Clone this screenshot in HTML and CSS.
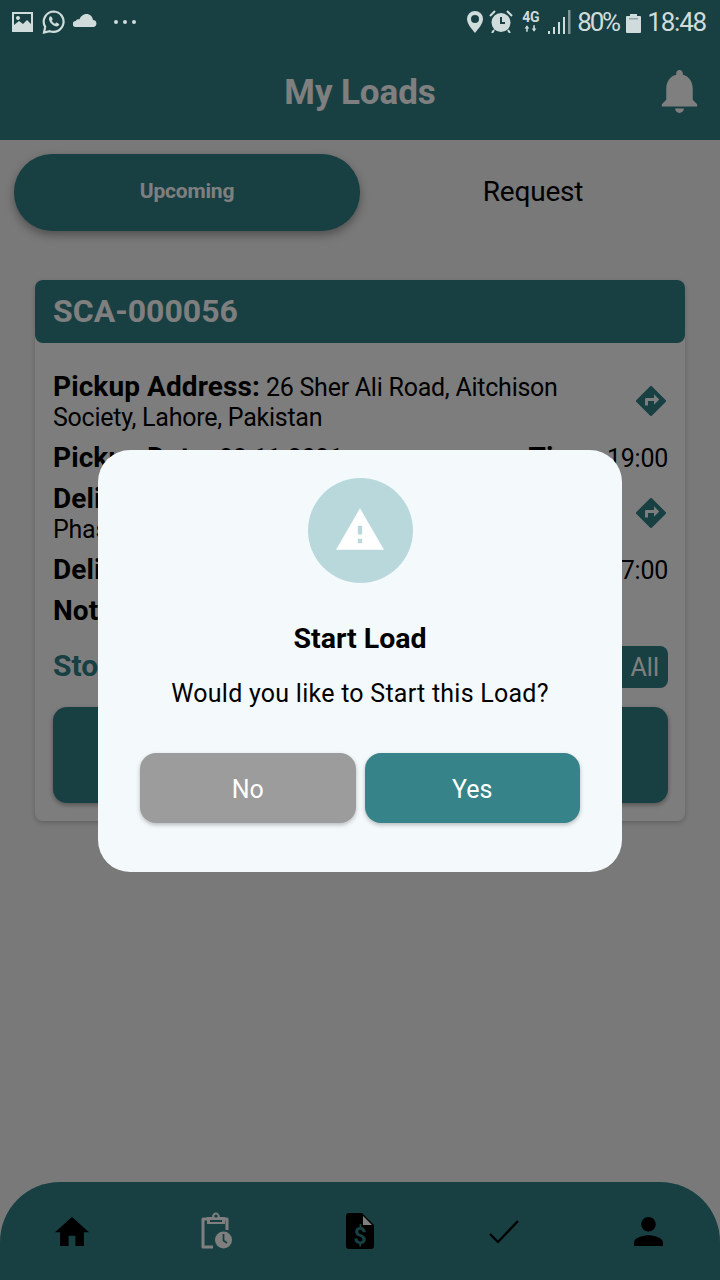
FILE: index.html
```html
<!DOCTYPE html>
<html lang="en">
<head>
<meta charset="utf-8">
<title>My Loads</title>
<link rel="stylesheet" href="styles.css">
</head>
<body>
<div class="screen">
  <div class="status">
    <div class="status-left">
      <svg class="st-img" viewBox="0 0 21 20"><path fill="#cfdcdb" fill-rule="evenodd" d="M0 0h21v20H0zM2 2v11l5-4 4 3 4-4 4 4V2zM6 4a2 2 0 1 1-.01 0z"/></svg>
      <svg class="st-wa" viewBox="0 0 24 24"><path fill="none" stroke="#cfdcdb" stroke-width="2.2" d="M12 1.500a10.200 10.200 0 0 0-8.800 15.400L2 22.500l5.700-1.300A10.200 10.200 0 1 0 12 1.500z"/><path fill="#cfdcdb" d="M8.300 6.500c-1.500 1-1.700 2.700-.8 4.600 1.100 2.300 3 4.100 5.400 5 1.800.7 3.400.3 4.200-1.100.3-.6.2-1-.3-1.300l-1.900-1c-.4-.2-.8-.1-1.100.3l-.7.8c-1.500-.6-2.700-1.700-3.400-3.200l.7-.7c.3-.3.300-.7.200-1l-.9-2c-.3-.6-1.800-.7-2.400-.4z"/></svg>
      <svg class="st-cloud" viewBox="0 0 24 13"><path fill="#cfdcdb" d="M3 13a3 3 0 0 1-.5-6C3.500 5.500 5 5 6.500 5.300 8 1.500 11 0 13.500 0 17 0 19.500 2.500 20 6a3.600 3.600 0 0 1 1 7z"/></svg>
      <div class="st-dots"><i></i><i></i><i></i></div>
    </div>
    <div class="status-right">
      <svg class="st-pin" viewBox="0 0 16 22"><path fill="#cfdcdb" fill-rule="evenodd" d="M8 0a8 8 0 0 0-8 8c0 5 5 10 8 14 3-4 8-9 8-14a8 8 0 0 0-8-8zm0 4a4 4 0 1 1 0 8 4 4 0 0 1 0-8z"/></svg>
      <svg class="st-alarm" viewBox="0 0 24 23"><circle cx="12" cy="12.500" r="9.500" fill="#cfdcdb"/><path d="M12 7v6h4" fill="none" stroke="#183f42" stroke-width="2"/><path d="M1 6l5-5M23 6l-5-5M5 20l-2 3M19 20l2 3" stroke="#cfdcdb" stroke-width="2" fill="none"/></svg>
      <div class="st-net"><span class="st-4g">4G</span><svg viewBox="0 0 19 8"><path fill="#cfdcdb" d="M5 0l3 4H6v4H4V4H2zM14 8l-3-4h2V0h2v4h2z"/></svg></div>
      <svg class="st-signal" viewBox="0 0 23 24"><path fill="#cfdcdb" d="M0 21h2v3H0zM5 17h2v7H5zM10 12h2v12h-2z"/><path fill="#cfdcdb" d="M15 7h2v17h-2z"/><path fill="#7f9696" d="M20 0h2.500v24H20z"/></svg>
      <span class="st-pct">80%</span>
      <svg class="st-batt" viewBox="0 0 15 19"><path fill="#cfdcdb" d="M4 0h7v2h3a1 1 0 0 1 1 1v15a1 1 0 0 1-1 1H1a1 1 0 0 1-1-1V3a1 1 0 0 1 1-1h3z"/><path fill="#8fa6a6" d="M3 4h9v1.500H3z"/></svg>
      <span class="st-time">18:48</span>
    </div>
  </div>

  <div class="app">
    <header class="topbar">
      <h1 class="topbar-title">My Loads</h1>
      <svg class="bell" viewBox="4 2.500 16 19.500"><path fill="#fff" d="M12 22c1.100 0 2-.9 2-2h-4c0 1.100.89 2 2 2zm6-6v-5c0-3.070-1.640-5.640-4.500-6.320V4c0-.83-.67-1.500-1.500-1.500s-1.500.67-1.500 1.500v.68C7.630 5.360 6 7.920 6 11v5l-2 2v1h16v-1l-2-2z"/></svg>
    </header>

    <main class="content">
      <div class="tabs">
        <div class="tab tab-active">Upcoming</div>
        <div class="tab">Request</div>
      </div>

      <section class="card">
        <div class="card-head">SCA-000056</div>
        <div class="card-body">
          <div class="addr">
            <p class="line"><b>Pickup Address:</b> 26 Sher Ali Road, Aitchison Society, Lahore, Pakistan</p>
            <svg class="dir" viewBox="2 2 20 20"><path fill="#307e84" d="M21.710 11.290l-9-9a.996.996 0 0 0-1.410 0l-9 9a.996.996 0 0 0 0 1.410l9 9c.39.39 1.020.39 1.410 0l9-9a.996.996 0 0 0 0-1.410zM14 14.500V12h-4v3H8v-4c0-.55.45-1 1-1h5V7.500l3.500 3.500-3.500 3.500z"/></svg>
          </div>
          <div class="split"><p class="line"><b>Pickup Date:</b> 22-11-2021</p><p class="line"><b>Time:</b> 19:00</p></div>
          <div class="addr">
            <p class="line"><b>Delivery Address:</b> DHA<br>Phase 5, Lahore, Pakistan</p>
            <svg class="dir" viewBox="2 2 20 20"><path fill="#307e84" d="M21.710 11.290l-9-9a.996.996 0 0 0-1.410 0l-9 9a.996.996 0 0 0 0 1.410l9 9c.39.39 1.020.39 1.410 0l9-9a.996.996 0 0 0 0-1.410zM14 14.500V12h-4v3H8v-4c0-.55.45-1 1-1h5V7.500l3.500 3.500-3.500 3.500z"/></svg>
          </div>
          <div class="split"><p class="line"><b>Delivery Date:</b> 22-11-2021</p><p class="line"><b>Time:</b> 17:00</p></div>
          <p class="line"><b>Notes:</b></p>
          <div class="stops"><span class="stops-label">Stops</span><span class="all-btn">All</span></div>
          <div class="big-btn"></div>
        </div>
      </section>
    </main>

    <nav class="bottomnav">
      <svg class="ico-home" viewBox="2 3 20 17"><path fill="#000" d="M10 20v-6h4v6h5v-8h3L12 3 2 12h3v8z"/></svg>
      <svg class="ico-clip" viewBox="0 0 32 37"><path fill="none" stroke="#fff" stroke-width="3" stroke-linejoin="round" d="M13 35H3V7h24v11"/><path fill="#fff" fill-rule="evenodd" d="M7 5h5c.5-6 7-6 8 0h5v7H7zM16 2.500a1.800 1.800 0 1 0 0 3.600 1.800 1.800 0 0 0 0-3.600z"/><path fill="#307e84" d="M10 8h12v2H10z"/><circle cx="23.500" cy="28" r="8.500" fill="#fff"/><path fill="none" stroke="#307e84" stroke-width="1.800" d="M23.500 22v6.500l3.500 2.500"/></svg>
      <svg class="ico-doc" viewBox="0 0 28 36"><path fill="#000" d="M3 0h13l12 12v21a3 3 0 0 1-3 3H3a3 3 0 0 1-3-3V3a3 3 0 0 1 3-3z"/><path fill="#fff" d="M17 3v9h9z"/><text class="nav-dollar" x="14" y="31" text-anchor="middle">$</text></svg>
      <svg class="ico-check" viewBox="0 0 30 23"><path fill="none" stroke="#000" stroke-width="2.300" d="M1 14l8 8L29 1"/></svg>
      <svg class="ico-person" viewBox="4 4 16 16"><path fill="#000" d="M12 12c2.210 0 4-1.790 4-4s-1.790-4-4-4-4 1.790-4 4 1.790 4 4 4zm0 2c-2.670 0-8 1.340-8 4v2h16v-2c0-2.660-5.330-4-8-4z"/></svg>
    </nav>

    <div class="scrim">
      <div class="dialog">
        <div class="dialog-circle">
          <svg class="warn" viewBox="1 2 22 19"><path fill="#fff" d="M1 21h22L12 2 1 21zm12-3h-2v-2h2v2zm0-4h-2v-4h2v4z"/></svg>
        </div>
        <h2 class="dialog-title">Start Load</h2>
        <p class="dialog-text">Would you like to Start this Load?</p>
        <div class="dialog-actions">
          <button class="btn btn-no">No</button>
          <button class="btn btn-yes">Yes</button>
        </div>
      </div>
    </div>
  </div>
</div>
</body>
</html>
```
FILE: styles.css
```css
* { box-sizing: border-box; }
html, body { margin: 0; padding: 0; }
body { font-family: Roboto, "Liberation Sans", sans-serif; }
.screen { width: 720px; height: 1280px; display: flex; flex-direction: column; overflow: hidden; background: #183f42; }

.status { height: 40px; flex: none; display: flex; justify-content: space-between; padding: 10px 14px 0 12px; background: #183f42; color: #cfdcdb; }
.status-left, .status-right { display: flex; align-items: flex-start; }
.st-img { width: 21px; height: 20px; margin-top: 2px; }
.st-wa { width: 24px; height: 24px; margin-left: 9px; }
.st-cloud { width: 24px; height: 13px; margin: 4px 0 0 7px; }
.st-dots { display: flex; gap: 5px; margin: 10px 0 0 17px; }
.st-dots i { width: 4px; height: 4px; border-radius: 50%; background: #cfdcdb; }
.st-pin { width: 16px; height: 22px; margin-top: 1px; }
.st-alarm { width: 24px; height: 23px; margin-left: 6px; }
.st-net { width: 19px; margin-left: 8px; display: flex; flex-direction: column; align-items: center; }
.st-4g { font-size: 14px; font-weight: 700; line-height: 14px; letter-spacing: -0.300px; }
.st-net svg { width: 15px; height: 7px; margin-top: 1px; }
.st-signal { width: 23px; height: 24px; margin-left: 8px; }
.st-pct { font-size: 26px; line-height: 24px; margin-left: 6px; letter-spacing: -2.200px; width: 43px; }
.st-batt { width: 15px; height: 19px; margin: 4px 0 0 6px; }
.st-time { font-size: 26px; line-height: 24px; margin-left: 6px; letter-spacing: -1.200px; }

.app { position: relative; flex: 1; display: flex; flex-direction: column; background: #f2f2f2; min-height: 0; }

.topbar { height: 100px; flex: none; background: #307e84; position: relative; display: flex; align-items: center; justify-content: center; }
.topbar-title { margin: 0 0 -4px; font-size: 35px; font-weight: 700; color: #fff; letter-spacing: -0.100px; }
.bell { position: absolute; right: 22px; top: 30px; width: 37px; height: 43px; }

.content { flex: 1; min-height: 0; padding: 14px 0 0; }
.tabs { display: flex; padding: 0 14px; margin-bottom: 49px; }
.tab { flex: 1; height: 77px; padding-bottom: 3px; display: flex; align-items: center; justify-content: center; font-size: 28px; color: #000; letter-spacing: -0.200px; }
.tab-active { background: #307e84; color: #fff; border-radius: 38px; font-size: 21px; font-weight: 700; box-shadow: 0 4px 10px rgba(0,0,0,.35); }

.card { margin: 0 35px; height: 541px; background: #fbfbfb; border-radius: 8px; box-shadow: 0 2px 5px rgba(0,0,0,.2); }
.card-head { height: 63px; padding-bottom: 1px; background: #307e84; border-radius: 8px; color: #fff; font-size: 32px; font-weight: 700; display: flex; align-items: center; padding-left: 18px; }
.card-body { padding: 29px 17px 0 18px; }
.line { margin: 0; font-size: 25px; line-height: 30px; color: #000; letter-spacing: -0.250px; }
.line b { font-size: 28px; letter-spacing: 0.100px; }
.addr { display: flex; align-items: center; justify-content: space-between; padding-right: 2px; }
.addr .line { width: 530px; }
.dir { width: 30px; height: 30px; flex: none; margin-top: -4px; }
.split { display: flex; justify-content: space-between; margin: 10px 0 10px; }
.stops { display: flex; align-items: center; justify-content: space-between; margin-top: 19px; height: 42px; }
.stops-label { font-size: 30px; font-weight: 700; color: #307e84; margin-top: -3px; }
.all-btn { width: 90px; height: 42px; background: #307e84; border-radius: 8px; color: #fff; font-size: 25px; display: flex; align-items: center; justify-content: flex-end; padding-right: 9px; }
.big-btn { height: 96px; margin-top: 19px; background: #307e84; border-radius: 14px; box-shadow: 0 2px 5px rgba(0,0,0,.35); }

.bottomnav { height: 98px; flex: none; background: #307e84; border-radius: 60px 60px 0 0; display: grid; grid-template-columns: repeat(5, 144px); grid-auto-rows: 38px; align-content: start; justify-items: center; align-items: center; padding-top: 30px; }
.ico-home { width: 34px; height: 29px; }
.ico-clip { width: 32px; height: 37px; margin-top: -2px; }
.ico-doc { width: 28px; height: 36px; }
.ico-check { width: 30px; height: 23px; }
.ico-person { width: 29px; height: 29px; }
.nav-dollar { font-family: Roboto, sans-serif; font-size: 23px; font-weight: 700; fill: #307e84; }

.scrim { position: absolute; inset: 0; background: rgba(0,0,0,.5); display: flex; align-items: center; justify-content: center; }
.dialog { width: 524px; height: 422px; margin-top: 2px; background: #f4f9fc; border-radius: 32px; display: flex; flex-direction: column; align-items: center; padding: 28px 42px 0; }
.dialog-circle { width: 105px; height: 105px; border-radius: 50%; background: #b9d8dc; display: flex; align-items: center; justify-content: center; }
.warn { width: 48px; height: 42px; margin-top: -3px; }
.dialog-title { margin: 39px 0 0; font-size: 28.500px; line-height: 34px; font-weight: 700; color: #000; }
.dialog-text { margin: 21px 0 0; font-size: 25px; line-height: 34px; color: #000; letter-spacing: 0.250px; white-space: nowrap; }
.dialog-actions { display: flex; gap: 9px; margin-top: 42px; width: 100%; justify-content: center; }
.btn { width: 216px; height: 70px; padding: 2px 0 0; border: 0; border-radius: 16px; font-family: inherit; font-size: 25px; color: #fff; box-shadow: 0 2px 4px rgba(0,0,0,.25); }
.btn-no { background: #9c9c9c; }
.btn-yes { background: #37838a; }
```
